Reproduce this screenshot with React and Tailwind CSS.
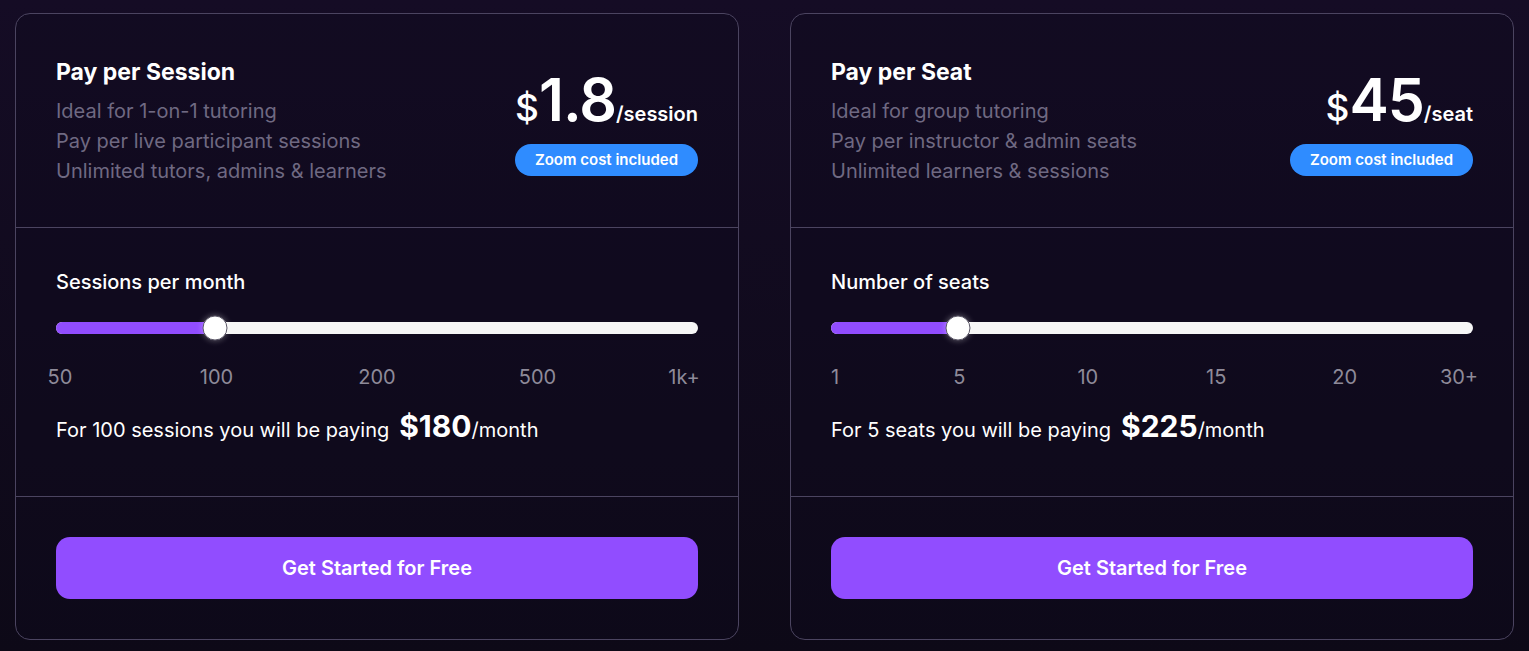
import React from 'react';

const plans = [
  {
    title: 'Pay per Session',
    lines: ['Ideal for 1-on-1 tutoring', 'Pay per live participant sessions', 'Unlimited tutors, admins & learners'],
    price: '1.8',
    unit: '/session',
    sliderLabel: 'Sessions per month',
    ticks: ['50', '100', '200', '500', '1k+'],
    fill: 24.8,
    summary: 'For 100 sessions you will be paying',
    total: '$180',
  },
  {
    title: 'Pay per Seat',
    lines: ['Ideal for group tutoring', 'Pay per instructor & admin seats', 'Unlimited learners & sessions'],
    price: '45',
    unit: '/seat',
    sliderLabel: 'Number of seats',
    ticks: ['1', '5', '10', '15', '20', '30+'],
    fill: 19.8,
    summary: 'For 5 seats you will be paying',
    total: '$225',
  },
];

function Ticks({ ticks }) {
  const last = ticks.length - 1;
  return (
    <div className="relative mt-[28px] h-[30px] text-[20px] leading-[30px] text-[#8e8a99]">
      {ticks.map((t, i) => {
        if (i === 0) {
          return (
            <span key={t} className="absolute left-[4px] top-0 -translate-x-1/2">
              {t}
            </span>
          );
        }
        if (i === last) {
          return (
            <span key={t} className="absolute right-[14px] top-0 translate-x-1/2">
              {t}
            </span>
          );
        }
        return (
          <span
            key={t}
            className="absolute top-0 -translate-x-1/2"
            style={{ left: `${(i / last) * 100}%` }}
          >
            {t}
          </span>
        );
      })}
    </div>
  );
}

function PlanCard({ plan }) {
  return (
    <div className="flex-1 rounded-[15px] border border-[#4b4460] bg-[#100a1d]/40">
      {/* Header */}
      <div className="flex items-start justify-between px-10 pt-[42px] pb-10 h-[213px]">
        <div>
          <h3 className="text-[23px] font-bold leading-8 text-white">{plan.title}</h3>
          <div className="mt-[8px] text-[20px] leading-[30px] text-[#6f6982]">
            {plan.lines.map((l) => (
              <p key={l}>{l}</p>
            ))}
          </div>
        </div>
        <div className="flex flex-col items-end">
          <div className="flex items-baseline text-white leading-none mt-[14px]">
            <span className="text-[37px] font-medium">$</span>
            <span className="text-[59px] font-semibold tracking-[-1px]">{plan.price}</span>
            <span className="text-[20px] font-semibold">{plan.unit}</span>
          </div>
          <span className="mt-[15px] rounded-full bg-[#2f8cff] px-5 h-8 flex items-center text-[15px] font-semibold text-white">
            Zoom cost included
          </span>
        </div>
      </div>

      {/* Slider */}
      <div className="border-t border-[#4b4460] px-10 pt-[39px] h-[269px]">
        <p className="text-[20px] leading-[30px] font-medium text-white">{plan.sliderLabel}</p>
        <div className="relative mt-[25px] h-3 rounded-full bg-[#f6f6f6]">
          <div className="h-3 rounded-l-full bg-[#914dff]" style={{ width: `${plan.fill}%` }} />
          <div
            className="absolute top-1/2 h-[25px] w-[25px] -translate-x-1/2 -translate-y-1/2 rounded-full border border-[#5c5868] bg-white shadow-[0_0_6px_rgba(255,255,255,0.35)]"
            style={{ left: `${plan.fill}%` }}
          />
        </div>
        <Ticks ticks={plan.ticks} />
        <p className="mt-[15px] flex items-baseline text-[20px] text-white">
          <span>{plan.summary}</span>
          <span className="ml-[10px] text-[30px] font-bold leading-[38px]">{plan.total}</span>
          <span>/month</span>
        </p>
      </div>

      {/* CTA */}
      <div className="border-t border-[#4b4460] px-10 pt-10 pb-10">
        <button className="h-[62px] w-full rounded-[14px] bg-[#914dff] text-[20px] font-semibold text-white">
          Get Started for Free
        </button>
      </div>
    </div>
  );
}

export default function App() {
  return (
    <div
      className="min-h-[651px] bg-gradient-to-b from-[#150c25] to-[#0d0917] px-[15px] pt-[13px] pb-[13px]"
      style={{ fontFamily: 'Inter, "Noto Sans", sans-serif' }}
    >
      <div className="flex gap-[51px]">
        {plans.map((p) => (
          <PlanCard key={p.title} plan={p} />
        ))}
      </div>
    </div>
  );
}
